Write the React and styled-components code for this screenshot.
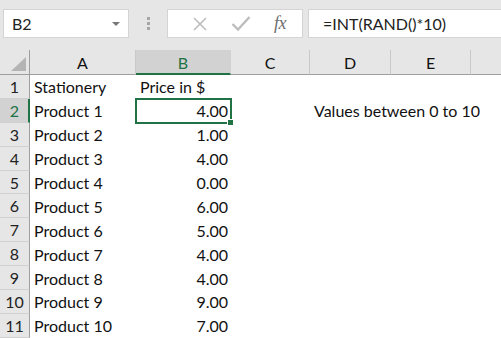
import React from "react";
import styled, { createGlobalStyle } from "styled-components";

const Global = createGlobalStyle`
  html, body { margin: 0; padding: 0; }
  body {
    width: 501px; height: 338px; overflow: hidden;
    background: #ffffff;
    font-family: "Lato", "Open Sans", sans-serif;
  }
`;

const Page = styled.div`
  width: 501px;
  height: 338px;
  overflow: hidden;
  display: flex;
  flex-direction: column;
`;

const TopBar = styled.div`
  height: 50px;
  flex: none;
  background: #e6e6e6;
  display: flex;
  align-items: flex-start;
  padding: 9px 0 0 3px;
  box-sizing: border-box;
`;

const NameBox = styled.div`
  width: 126px;
  height: 29px;
  box-sizing: border-box;
  background: #fff;
  border: 1px solid #d4d4d4;
  display: flex;
  align-items: center;
  justify-content: space-between;
  padding: 0 8px 0 8px;
  font-size: 16px;
  color: #222;
`;

const Caret = styled.span`
  width: 0; height: 0;
  border-left: 4px solid transparent;
  border-right: 4px solid transparent;
  border-top: 4px solid #777;
  margin-top: 1px;
`;

const Grip = styled.div`
  width: 38px;
  height: 29px;
  display: flex;
  flex-direction: column;
  align-items: center;
  justify-content: center;
  gap: 2px;
`;

const GripDot = styled.span`
  width: 3px; height: 3px; background: #a6a6a6;
`;

const ButtonsBox = styled.div`
  width: 136px;
  height: 29px;
  box-sizing: border-box;
  background: #fff;
  border: 1px solid #d4d4d4;
  display: flex;
  align-items: center;
  padding-left: 11px;
`;

const IconSlot = styled.div`
  width: 45px;
  height: 27px;
  display: flex;
  align-items: center;
  justify-content: center;
`;

const Fx = styled.span`
  font-family: "Liberation Serif", "DejaVu Serif", serif;
  font-style: italic;
  font-size: 18px;
  color: #6e6e6e;
  letter-spacing: -0.5px;
  margin-right: 3px;
`;

const FormulaInput = styled.div`
  flex: 1;
  margin-left: 5px;
  height: 29px;
  box-sizing: border-box;
  background: #fff;
  border: 1px solid #d4d4d4;
  border-right: none;
  display: flex;
  align-items: center;
  padding-left: 14px;
  font-size: 16px;
  color: #222;
`;

const COLS = "30px 106px 95px 79px 81px 80px 60px";

const Sheet = styled.div`
  position: relative;
  display: grid;
  grid-template-columns: ${COLS};
  grid-auto-rows: 23.9px;
  grid-template-rows: 25px;
  background: #fff;
`;

const Corner = styled.div`
  background: #e6e6e6;
  border-right: 1px solid #9e9e9e;
  border-bottom: 1px solid #9e9e9e;
  position: relative;
  box-sizing: border-box;
`;

const CornerTriangle = styled.span`
  position: absolute;
  right: 3px;
  bottom: 3px;
  width: 0; height: 0;
  border-left: 15px solid transparent;
  border-bottom: 14px solid #b4b4b4;
`;

const ColHeader = styled.div`
  box-sizing: border-box;
  background: ${(p) => (p.$selected ? "#d2d2d2" : "#e6e6e6")};
  border-right: 1px solid ${(p) => (p.$selected ? "#d2d2d2" : "#c9c9c9")};
  border-bottom: ${(p) => (p.$selected ? "2px solid #217346" : "1px solid #9e9e9e")};
  color: ${(p) => (p.$selected ? "#217346" : "#111")};
  display: flex;
  align-items: center;
  justify-content: center;
  font-size: 16px;
  padding-top: ${(p) => (p.$selected ? "1px" : "0")};
`;

const RowHeader = styled.div`
  box-sizing: border-box;
  background: ${(p) => (p.$selected ? "#d2d2d2" : "#e6e6e6")};
  border-right: ${(p) => (p.$selected ? "2px solid #217346" : "1px solid #9e9e9e")};
  border-bottom: 1px solid #d0d0d0;
  color: ${(p) => (p.$selected ? "#217346" : "#222")};
  display: flex;
  align-items: center;
  justify-content: center;
  font-size: 16px;
  padding-left: ${(p) => (p.$selected ? "1px" : "0")};
`;

const Cell = styled.div`
  display: flex;
  align-items: center;
  justify-content: ${(p) => (p.$right ? "flex-end" : "flex-start")};
  padding: 0 3px 0 4px;
  font-size: 16px;
  color: #111;
  white-space: nowrap;
  overflow: visible;
  min-width: 0;
`;

const Selection = styled.div`
  position: absolute;
  left: 135px;
  top: 47.9px;
  width: 97px;
  height: 25.9px;
  box-sizing: border-box;
  border: 2px solid #217346;
  pointer-events: none;
`;

const Handle = styled.span`
  position: absolute;
  right: -4px;
  bottom: -4px;
  width: 5px;
  height: 5px;
  background: #217346;
  border: 1px solid #fff;
`;

const XIcon = () => (
  <svg width="16" height="16" viewBox="0 0 16 16">
    <path d="M2 2 L14 14 M14 2 L2 14" stroke="#bdbdbd" strokeWidth="1.6" fill="none" />
  </svg>
);

const CheckIcon = () => (
  <svg width="20" height="17" viewBox="0 0 20 17">
    <path d="M1.5 9 L7 14.5 L18.5 2" stroke="#bdbdbd" strokeWidth="2.4" fill="none" />
  </svg>
);

const rows = [
  ["Stationery", "Price in $", false],
  ["Product 1", "4.00", true],
  ["Product 2", "1.00", true],
  ["Product 3", "4.00", true],
  ["Product 4", "0.00", true],
  ["Product 5", "6.00", true],
  ["Product 6", "5.00", true],
  ["Product 7", "4.00", true],
  ["Product 8", "4.00", true],
  ["Product 9", "9.00", true],
  ["Product 10", "7.00", true],
];

export default function App() {
  return (
    <Page>
      <Global />
      <TopBar>
        <NameBox>
          <span>B2</span>
          <Caret />
        </NameBox>
        <Grip>
          <GripDot />
          <GripDot />
          <GripDot />
        </Grip>
        <ButtonsBox>
          <IconSlot><XIcon /></IconSlot>
          <IconSlot><CheckIcon /></IconSlot>
          <IconSlot><Fx>fx</Fx></IconSlot>
        </ButtonsBox>
        <FormulaInput>=INT(RAND()*10)</FormulaInput>
      </TopBar>
      <Sheet>
        <Corner><CornerTriangle /></Corner>
        {["A", "B", "C", "D", "E", ""].map((c) => (
          <ColHeader key={c || "F"} $selected={c === "B"}>{c}</ColHeader>
        ))}
        {rows.map(([a, b, right], i) => (
          <React.Fragment key={i}>
            <RowHeader $selected={i === 1}>{i + 1}</RowHeader>
            <Cell>{a}</Cell>
            <Cell $right={right}>{b}</Cell>
            <Cell />
            <Cell>{i === 1 ? "Values between 0 to 10" : ""}</Cell>
            <Cell />
            <Cell />
          </React.Fragment>
        ))}
        <Selection><Handle /></Selection>
      </Sheet>
    </Page>
  );
}
